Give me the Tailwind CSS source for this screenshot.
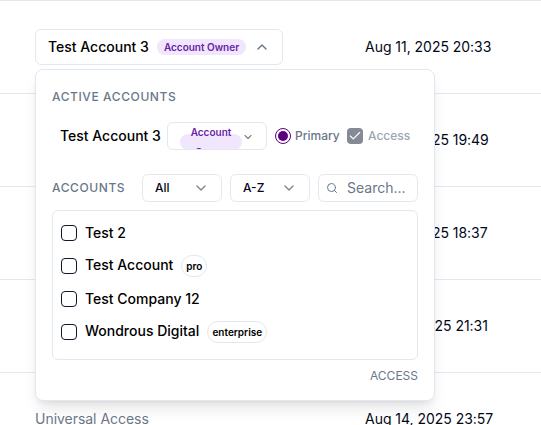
<!DOCTYPE html>
<html lang="en">
<head>
<meta charset="utf-8">
<title>Accounts</title>
<script src="https://cdn.jsdelivr.net/npm/@tailwindcss/browser@4"></script>
</head>
<body class="h-[425px] w-[541px] overflow-hidden bg-white font-['Inter',sans-serif] text-sm text-[#020817]">
<main class="relative h-[425px] w-[541px] overflow-hidden">
  <div class="flex h-[93px] items-center border-t border-slate-200 pl-[35px] pr-4">
    <div class="w-[330px]">
      <button class="flex h-9 w-[248px] items-center rounded-md border border-slate-200 bg-white pl-3 font-medium text-black">
        <span class="w-[101px] whitespace-nowrap text-left">Test Account 3</span>
        <span class="ml-2 flex h-4 w-[89px] items-center justify-center whitespace-nowrap rounded-full bg-[#f0e6fd] text-[10px] font-semibold text-[#6b21a8]">Account Owner</span>
        <svg class="ml-2 size-4" viewBox="0 0 24 24" fill="none" stroke="#64748b" stroke-width="2" stroke-linecap="round" stroke-linejoin="round"><path d="m18 15-6-6-6 6"/></svg>
      </button>
    </div>
    <span class="whitespace-nowrap tracking-[-0.03px]">Aug 11, 2025 20:33</span>
  </div>
  <div class="flex h-[93px] items-center border-t border-slate-200 pl-[365px]"><span class="whitespace-nowrap tracking-[-0.03px]">Aug 11, 2025 19:49</span></div>
  <div class="flex h-[93px] items-center border-t border-slate-200 pl-[365px]"><span class="whitespace-nowrap tracking-[-0.03px]">Aug 11, 2025 18:37</span></div>
  <div class="flex h-[93px] items-center border-t border-slate-200 pl-[365px]"><span class="whitespace-nowrap tracking-[-0.03px]">Aug 13, 2025 21:31</span></div>
  <div class="flex h-[93px] items-center border-t border-slate-200 pl-[35px]"><span class="w-[330px] tracking-[-0.03px] text-[#697789]">Universal Access</span><span class="whitespace-nowrap tracking-[-0.03px]">Aug 14, 2025 23:57</span></div>

  <section class="absolute left-[35px] top-[69px] flex h-[332px] w-[400px] flex-col rounded-lg border border-slate-200 bg-white px-4 pt-[19px] shadow-lg">
    <h2 class="h-4 text-xs font-medium leading-4 tracking-[0.6px] text-[#697789]">ACTIVE ACCOUNTS</h2>
    <div class="mt-[17px] flex h-7 items-center pl-2">
      <span class="w-[107px] whitespace-nowrap font-medium text-black">Test Account 3</span>
      <button class="flex h-7 w-[100px] items-start overflow-hidden rounded-md border border-slate-200 pl-3">
        <span class="mt-[11px] flex h-4 w-[62px] shrink-0 items-center justify-center rounded-full bg-[#f0e6fd] text-center text-[10px] font-semibold leading-5 text-[#6b21a8]"><span>Account<br>Owner</span></span>
        <svg class="mt-2 size-3 shrink-0" viewBox="0 0 24 24" fill="none" stroke="#808080" stroke-width="2.2" stroke-linecap="round" stroke-linejoin="round"><path d="m6 9 6 6 6-6"/></svg>
      </button>
      <span class="ml-2 flex size-4 items-center justify-center rounded-full border border-[#5c0080]"><span class="size-2.5 rounded-full bg-[#5c0080]"></span></span>
      <span class="ml-1 w-[52px] text-xs font-medium text-[#697789]">Primary</span>
      <span class="flex size-4 items-center justify-center rounded bg-[#868a94]"><svg class="size-3.5" viewBox="0 0 24 24" fill="none" stroke="#fff" stroke-width="2" stroke-linecap="round" stroke-linejoin="round"><path d="M20 6 9 17l-5-5"/></svg></span>
      <span class="ml-[5px] text-xs font-medium text-[#9ba5b3]">Access</span>
    </div>
    <div class="mt-6 flex h-7 items-center gap-2">
      <h2 class="w-[82px] text-xs font-medium tracking-[0.6px] text-[#697789]">ACCOUNTS</h2>
      <button class="flex h-7 w-20 items-center justify-between rounded-md border border-slate-200 px-3 text-xs font-medium">All<svg class="size-4" viewBox="0 0 24 24" fill="none" stroke="#808590" stroke-width="2" stroke-linecap="round" stroke-linejoin="round"><path d="m6 9 6 6 6-6"/></svg></button>
      <button class="flex h-7 w-20 items-center justify-between rounded-md border border-slate-200 px-3 text-xs font-medium">A-Z<svg class="size-4" viewBox="0 0 24 24" fill="none" stroke="#808590" stroke-width="2" stroke-linecap="round" stroke-linejoin="round"><path d="m6 9 6 6 6-6"/></svg></button>
      <label class="flex h-7 w-[100px] items-center rounded-md border border-slate-200 pl-[7px] text-[#697789]"><svg class="size-3" viewBox="0 0 24 24" fill="none" stroke="currentColor" stroke-width="2" stroke-linecap="round" stroke-linejoin="round"><circle cx="11" cy="11" r="8"/><path d="m21 21-4.3-4.3"/></svg><span class="ml-[9px]">Search...</span></label>
    </div>
    <ul class="mt-2 h-[150px] rounded-md border border-slate-200 pl-2 pt-[5px] font-medium text-black">
      <li class="flex h-[33px] items-center"><span class="mr-2 size-4 rounded border border-[#0f172a]"></span>Test 2</li>
      <li class="flex h-[33px] items-center"><span class="mr-2 size-4 rounded border border-[#0f172a]"></span><span class="pb-0.5">Test Account</span><span class="ml-2 flex h-[22px] w-[26px] items-center justify-center rounded-full border border-slate-200 pt-0.5 text-[10px] font-semibold">pro</span></li>
      <li class="flex h-[33px] items-center"><span class="mr-2 size-4 rounded border border-[#0f172a]"></span>Test Company 12</li>
      <li class="flex h-[33px] items-center"><span class="mr-2 size-4 rounded border border-[#0f172a]"></span><span class="pb-0.5">Wondrous Digital</span><span class="ml-2 flex h-[22px] w-[60px] items-center justify-center rounded-full border border-slate-200 pt-0.5 text-[10px] font-semibold">enterprise</span></li>
    </ul>
    <div class="mt-2 text-right text-xs text-[#697789]">ACCESS</div>
  </section>
</main>
</body>
</html>
